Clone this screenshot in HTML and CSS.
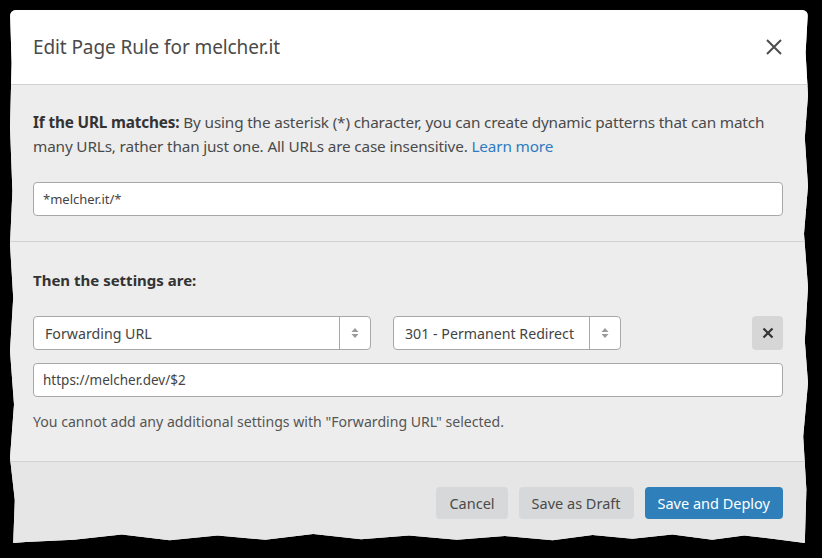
FILE: index.html
```html
<!DOCTYPE html>
<html>
<head>
<meta charset="utf-8">
<link rel="stylesheet" href="styles.css">
</head>
<body>
<div class="card">
  <div class="header">
    <h1 class="title">Edit Page Rule for melcher.it</h1>
    <button class="close" aria-label="Close">
      <svg width="18" height="18" viewBox="0 0 18 18"><path d="M2 2L16 16M16 2L2 16" stroke="#4d4d4d" stroke-width="2" fill="none"/></svg>
    </button>
  </div>
  <div class="section match">
    <p class="desc"><strong>If the URL matches:</strong> By using the asterisk (*) character, you can create dynamic patterns that can match<br>many URLs, rather than just one. All URLs are case insensitive. <a class="link" href="#">Learn more</a></p>
    <div class="input">*melcher.it/*</div>
  </div>
  <div class="section settings">
    <p class="label">Then the settings are:</p>
    <div class="row">
      <div class="select select-wide">
        <span class="sel-text">Forwarding URL</span>
        <span class="sel-arrow"><svg width="10" height="14" viewBox="0 0 10 14"><path d="M5 2L8.5 6H1.5Z M5 12L8.5 8H1.5Z" fill="#9a9a9a"/></svg></span>
      </div>
      <div class="select select-mid">
        <span class="sel-text">301 - Permanent Redirect</span>
        <span class="sel-arrow"><svg width="10" height="14" viewBox="0 0 10 14"><path d="M5 2L8.5 6H1.5Z M5 12L8.5 8H1.5Z" fill="#9a9a9a"/></svg></span>
      </div>
      <button class="remove" aria-label="Remove">
        <svg width="12" height="12" viewBox="0 0 12 12"><path d="M1.5 1.5L10.5 10.5M10.5 1.5L1.5 10.5" stroke="#333" stroke-width="2.2" fill="none"/></svg>
      </button>
    </div>
    <div class="input">https://melcher.dev/$2</div>
    <p class="note">You cannot add any additional settings with "Forwarding URL" selected.</p>
  </div>
  <div class="footer">
    <button class="btn btn-gray">Cancel</button>
    <button class="btn btn-gray">Save as Draft</button>
    <button class="btn btn-blue">Save and Deploy</button>
  </div>
</div>
</body>
</html>
```
FILE: styles.css
```css
* { box-sizing: border-box; }
html, body { margin: 0; padding: 0; }
body {
  background: #000;
  width: 822px;
  height: 558px;
  padding: 10px 14px 15px 10px;
  font-family: "Noto Sans", "Open Sans", sans-serif;
  color: #4a4a4a;
}
.card {
  width: 798px;
  height: 533px;
  background: #e6e6e6;
  display: flex;
  flex-direction: column;
  border-radius: 6px 6px 0 0;
  overflow: hidden;
  clip-path: polygon(0 0, 100% 0, 99.7% 8%, 100% 16%, 99.6% 24%, 100% 33%, 99.5% 42%, 100% 52%, 99.6% 62%, 100% 70%, 99.4% 80%, 99.8% 90%, 99.6% 100%,
    96% 99.3%, 92% 98.6%, 88% 99.4%, 83% 98.4%, 78% 99.2%, 73% 98.5%, 68% 99.5%, 62% 98.7%, 56% 99.4%, 50% 98.6%, 44% 99.3%, 38% 98.3%, 32% 99.4%, 26% 98.6%, 20% 99.5%, 14% 98.4%, 8% 99.4%, 2% 99.8%, 0.4% 100%,
    0.6% 92%, 0 84%, 0.5% 74%, 0 64%, 0.4% 54%, 0 44%, 0.3% 34%, 0 22%, 0.2% 10%);
}
.header {
  height: 75px;
  background: #fff;
  border-bottom: 1px solid #d2d2d2;
  display: flex;
  align-items: center;
  justify-content: space-between;
  padding: 0 25px 0 23px;
  flex: none;
}
.title {
  margin: 0;
  font-size: 19px;
  font-weight: 400;
  color: #4a4a4a;
  letter-spacing: -0.1px;
}
.close {
  background: none;
  border: 0;
  padding: 0;
  width: 18px;
  height: 18px;
  display: flex;
}
.section {
  background: #ededed;
  border-bottom: 1px solid #d2d2d2;
  padding-left: 23px;
  padding-right: 25px;
  flex: none;
}
.match { padding-top: 25px; padding-bottom: 25px; }
.desc {
  margin: 0;
  font-size: 15.3px;
  line-height: 24px;
  color: #4a4a4a;
  letter-spacing: -0.15px;
}
.desc strong { color: #333; font-weight: 700; }
.link { color: #2f7bbf; text-decoration: none; }
.input {
  margin-top: 24px;
  height: 34px;
  background: #fff;
  border: 1px solid #a8a8a8;
  border-radius: 4px;
  padding: 0 9px;
  display: flex;
  align-items: center;
  font-size: 13.5px;
  color: #444;
}
.match .input { font-size: 13px; }
.settings { padding-top: 26px; padding-bottom: 29px; }
.label {
  margin: 0;
  font-size: 15px;
  line-height: 24px;
  font-weight: 700;
  color: #333;
}
.row {
  margin-top: 24px;
  display: flex;
  align-items: center;
  gap: 22px;
}
.settings .input { margin-top: 13px; }
.select {
  height: 34px;
  background: #fff;
  border: 1px solid #a8a8a8;
  border-radius: 4px;
  display: flex;
  align-items: stretch;
}
.select-wide { width: 338px; }
.select-mid { width: 228px; }
.sel-text {
  flex: 1;
  display: flex;
  align-items: center;
  padding-left: 11px;
  font-size: 14.2px;
  color: #444;
}
.sel-arrow {
  width: 31px;
  border-left: 1px solid #a8a8a8;
  display: flex;
  align-items: center;
  justify-content: center;
}
.remove {
  margin-left: auto;
  width: 31px;
  height: 34px;
  border: 0;
  border-radius: 4px;
  background: #d6d6d6;
  display: flex;
  align-items: center;
  justify-content: center;
  padding: 0;
}
.note {
  margin: 15px 0 0;
  font-size: 14.1px;
  line-height: 20px;
  color: #555;
}
.footer {
  flex: 1;
  background: #e6e6e6;
  display: flex;
  justify-content: flex-end;
  align-items: flex-start;
  gap: 11px;
  padding: 25px 25px 0 0;
}
.btn {
  height: 32px;
  border: 0;
  border-radius: 4px;
  font-family: inherit;
  font-size: 14.5px;
  padding: 0 13px;
}
.btn-gray { background: #d6d8d9; color: #4a4a4a; }
.btn-blue { background: #2f80ba; color: #fff; }
```
